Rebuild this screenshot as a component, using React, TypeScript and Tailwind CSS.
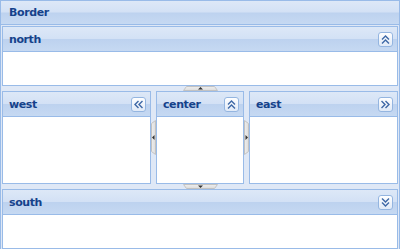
import React, { useId } from "react";

const headerBg =
  "bg-[linear-gradient(to_bottom,#dde8f7_0%,#d3e1f5_48%,#bdd2ef_52%,#c6d9f2_100%)]";

function ToolIcon({ dir }: { dir: "up" | "down" | "left" | "right" }) {
  const id = useId().replace(/:/g, "");
  const angle = dir === "up" ? 0 : dir === "down" ? 180 : dir === "left" ? -90 : 90;
  return (
    <svg width="15" height="15" viewBox="0 0 15 15" className="block">
      <defs>
        <linearGradient id={`g${id}`} x1="0" y1="0" x2="0" y2="1">
          <stop offset="0" stopColor="#ffffff" />
          <stop offset="1" stopColor="#dfe9f7" />
        </linearGradient>
      </defs>
      <rect x="0.5" y="0.5" width="14" height="14" rx="2.5" fill={`url(#g${id})`} stroke="#94b5e0" />
      <g
        transform={`rotate(${angle} 7.5 7.5)`}
        stroke="#3e68a6"
        strokeWidth="1.4"
        fill="none"
        strokeLinecap="square"
      >
        <path d="M4.5 7 L7.5 4 L10.5 7" />
        <path d="M4.5 11 L7.5 8 L10.5 11" />
      </g>
    </svg>
  );
}

function Panel({
  title,
  dir,
  className,
}: {
  title: string;
  dir: "up" | "down" | "left" | "right";
  className: string;
}) {
  return (
    <div className={`flex flex-col border border-[#99bbe8] bg-white ${className}`}>
      <div
        className={`h-[25px] shrink-0 flex items-center justify-between border-b border-[#99bbe8] pl-[6px] pr-[4px] ${headerBg}`}
      >
        <span className="text-[11px] font-bold text-[#15428b] tracking-[-0.4px] leading-none">
          {title}
        </span>
        <ToolIcon dir={dir} />
      </div>
      <div className="flex-1 bg-white" />
    </div>
  );
}

function HTab({ up }: { up: boolean }) {
  return (
    <svg width="35" height="5" viewBox="0 0 35 5" className="block">
      <defs>
        <linearGradient id={up ? "htu" : "htd"} x1="0" y1="0" x2="0" y2="1">
          <stop offset="0" stopColor="#eeeeee" />
          <stop offset="1" stopColor="#dcdcdc" />
        </linearGradient>
      </defs>
      {up ? (
        <>
          <path d="M3.5 0.5 H31.5 L34.5 4.5 H0.5 Z" fill="url(#htu)" stroke="#c2c2c2" strokeWidth="1" />
          <path d="M15 3.5 L17.5 1 L20 3.5 Z" fill="#333" />
        </>
      ) : (
        <>
          <path d="M0.5 0.5 H34.5 L31.5 4.5 H3.5 Z" fill="url(#htd)" stroke="#c2c2c2" strokeWidth="1" />
          <path d="M15 1.5 L17.5 4 L20 1.5 Z" fill="#333" />
        </>
      )}
    </svg>
  );
}

function VTab({ left }: { left: boolean }) {
  return (
    <svg width="5" height="35" viewBox="0 0 5 35" className="block">
      <defs>
        <linearGradient id={left ? "vtl" : "vtr"} x1="0" y1="0" x2="1" y2="0">
          <stop offset="0" stopColor="#eeeeee" />
          <stop offset="1" stopColor="#dcdcdc" />
        </linearGradient>
      </defs>
      {left ? (
        <>
          <path d="M0.5 3.5 V31.5 L4.5 34.5 V0.5 Z" fill="url(#vtl)" stroke="#c2c2c2" strokeWidth="1" />
          <path d="M3.5 15 L1 17.5 L3.5 20 Z" fill="#333" />
        </>
      ) : (
        <>
          <path d="M0.5 0.5 V34.5 L4.5 31.5 V3.5 Z" fill="url(#vtr)" stroke="#c2c2c2" strokeWidth="1" />
          <path d="M1.5 15 L4 17.5 L1.5 20 Z" fill="#333" />
        </>
      )}
    </svg>
  );
}

export default function App() {
  return (
    <div
      className="w-[400px] h-[249px] overflow-hidden"
      style={{ fontFamily: '"DejaVu Sans", Verdana, sans-serif' }}
    >
      <div className="w-[400px] h-[250px] border border-[#99bbe8] bg-[#dfe8f6] flex flex-col">
        <div
          className={`h-[24px] shrink-0 flex items-center border-b border-[#99bbe8] pl-[8px] ${headerBg}`}
        >
          <span className="text-[11px] font-bold text-[#15428b] tracking-[-0.4px] leading-none">
            Border
          </span>
        </div>
        <div className="flex-1 flex flex-col px-[1px] pt-[1px]">
          <Panel title="north" dir="up" className="h-[60px] shrink-0" />
          <div className="h-[5px] shrink-0 flex justify-center">
            <HTab up />
          </div>
          <div className="h-[93px] shrink-0 flex">
            <Panel title="west" dir="left" className="w-[149px] shrink-0" />
            <div className="w-[5px] shrink-0 flex items-center">
              <VTab left />
            </div>
            <Panel title="center" dir="up" className="flex-1" />
            <div className="w-[5px] shrink-0 flex items-center">
              <VTab left={false} />
            </div>
            <Panel title="east" dir="right" className="w-[149px] shrink-0" />
          </div>
          <div className="h-[5px] shrink-0 flex justify-center">
            <HTab up={false} />
          </div>
          <Panel title="south" dir="down" className="h-[60px] shrink-0" />
        </div>
      </div>
    </div>
  );
}
